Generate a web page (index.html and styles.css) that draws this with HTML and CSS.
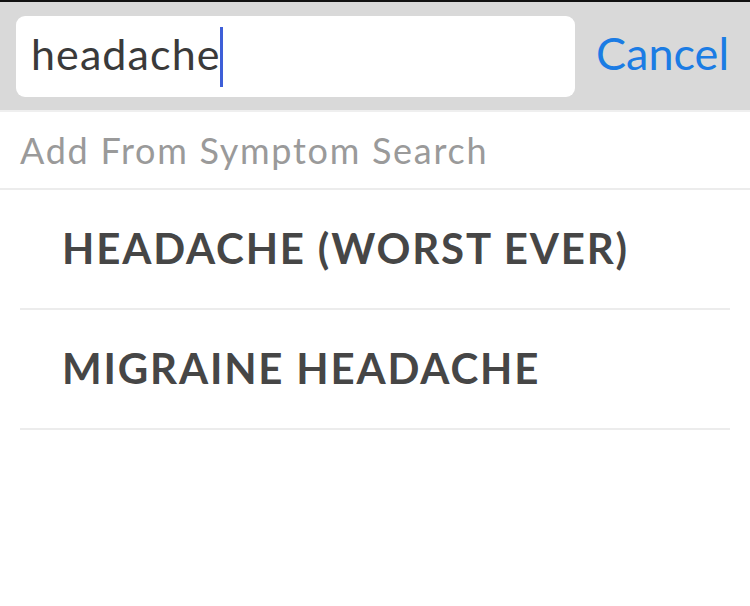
FILE: index.html
```html
<!DOCTYPE html>
<html>
<head>
<meta charset="utf-8">
<link rel="stylesheet" href="styles.css">
</head>
<body>
<div class="screen">
  <div class="topbar"></div>
  <div class="searchbar">
    <div class="field"><span class="query">headache</span><span class="caret"></span></div>
    <div class="cancel">Cancel</div>
  </div>
  <div class="section">Add From Symptom Search</div>
  <ul class="list">
    <li class="item">HEADACHE (WORST EVER)</li>
    <li class="item">MIGRAINE HEADACHE</li>
  </ul>
</div>
</body>
</html>
```
FILE: styles.css
```css
* { box-sizing: border-box; }
html, body { margin: 0; padding: 0; background: #fff; }
body { font-family: Lato, "Open Sans", sans-serif; }
.screen { width: 750px; height: 606px; overflow: hidden; background: #fff; }
.topbar { height: 2px; background: #111; }
.searchbar {
  height: 110px;
  background: #d9d9d9;
  display: flex;
  align-items: flex-start;
  padding: 14px 0 0 16px;
  border-bottom: 2px solid #efefef;
}
.field {
  width: 559px;
  height: 81px;
  background: #fff;
  border-radius: 9px;
  display: flex;
  align-items: center;
  padding-left: 15px;
}
.query { font-size: 43px; color: #3a3a3a; letter-spacing: 1.1px; line-height: 1; margin-bottom: 6px; }
.caret { width: 3px; height: 60px; background: #3e5fd8; margin-left: -1px; }
.cancel {
  font-size: 45px;
  color: #1b7ce4;
  margin-left: 21px;
  height: 81px;
  display: flex;
  align-items: center;
  line-height: 1;
  padding-bottom: 6px;
}
.section {
  height: 78px;
  padding-left: 20px;
  display: flex;
  align-items: center;
  font-size: 36px;
  letter-spacing: 1.72px;
  color: #9a9a9a;
  border-bottom: 2px solid #ececec;
}
.list { list-style: none; margin: 0; padding: 0 20px; }
.item {
  height: 120px;
  display: flex;
  align-items: center;
  padding-left: 42px;
  padding-bottom: 3px;
  font-size: 42px;
  font-weight: bold;
  letter-spacing: 1.82px;
  color: #464646;
  border-bottom: 2px solid #ececec;
}
```
